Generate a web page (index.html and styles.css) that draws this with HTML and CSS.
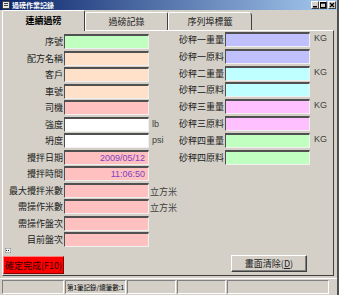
FILE: index.html
```html
<!DOCTYPE html>
<html lang="zh-Hant">
<head>
    <meta charset="UTF-8">
    <title>過磅作業記錄</title>
    <link rel="stylesheet" href="styles.css">
</head>
<body>
<div class="window">
    <div class="titlebar">
        <svg class="app-icon" width="8" height="8" viewBox="0 0 8 8">
            <rect x="0.5" y="0.5" width="7" height="7" fill="#e8e8e8" stroke="#404040"/>
            <rect x="2" y="2" width="4" height="1" fill="#404040"/>
            <rect x="2" y="4" width="4" height="1" fill="#404040"/>
        </svg>
        <span class="title">過磅作業記錄</span>
        <div class="controls">
            <span class="ctl"><svg width="6" height="6"><rect x="1" y="4" width="4" height="1.5" fill="#000"/></svg></span>
            <span class="ctl"><svg width="6" height="6"><rect x="0.5" y="0.5" width="5" height="5" fill="none" stroke="#000"/><rect x="0.5" y="0.5" width="5" height="1.2" fill="#000"/></svg></span>
            <span class="ctl"><svg width="6" height="6"><path d="M1 1 L5 5 M5 1 L1 5" stroke="#000" stroke-width="1.3"/></svg></span>
        </div>
    </div>

    <div class="tabs">
        <div class="tab active">連續過磅</div>
        <div class="tab">過磅記錄</div>
        <div class="tab last">序列埠標籤</div>
    </div>

    <div class="panel">
        <div class="columns">
            <div class="grid left">
                <span class="lbl">序號</span><span class="field green"></span><span></span>
                <span class="lbl">配方名稱</span><span class="field peach"></span><span></span>
                <span class="lbl">客戶</span><span class="field peach"></span><span></span>
                <span class="lbl">車號</span><span class="field peach"></span><span></span>
                <span class="lbl">司機</span><span class="field pink"></span><span></span>
                <span class="lbl">強度</span><span class="field white"></span><span class="unit">lb</span>
                <span class="lbl">坍度</span><span class="field white"></span><span class="unit">psi</span>
                <span class="lbl">攪拌日期</span><span class="field pink value">2009/05/12</span><span></span>
                <span class="lbl">攪拌時間</span><span class="field pink value">11:06:50</span><span></span>
                <span class="lbl">最大攪拌米數</span><span class="field pink"></span><span class="unit cjk">立方米</span>
                <span class="lbl">需操作米數</span><span class="field pink"></span><span class="unit cjk">立方米</span>
                <span class="lbl">需操作盤次</span><span class="field pink"></span><span></span>
                <span class="lbl">目前盤次</span><span class="field pink"></span><span></span>
            </div>
            <div class="grid right">
                <span class="lbl">砂秤一重量</span><span class="field lavender"></span><span class="unit kg">KG</span>
                <span class="lbl">砂秤一原料</span><span class="field lavender"></span><span></span>
                <span class="lbl">砂秤二重量</span><span class="field cyan"></span><span class="unit kg">KG</span>
                <span class="lbl">砂秤二原料</span><span class="field cyan"></span><span></span>
                <span class="lbl">砂秤三重量</span><span class="field magenta"></span><span class="unit kg">KG</span>
                <span class="lbl">砂秤三原料</span><span class="field magenta"></span><span></span>
                <span class="lbl">砂秤四重量</span><span class="field green"></span><span class="unit kg">KG</span>
                <span class="lbl">砂秤四原料</span><span class="field green"></span><span></span>
            </div>
        </div>

        <div class="footer">
            <div class="footer-left">
                <svg class="mini" width="6" height="5" viewBox="0 0 6 5">
                    <rect x="0" y="0" width="6" height="5" fill="#f4f4f4" stroke="#606060" stroke-width="0.8"/>
                    <rect x="1" y="2" width="1" height="1" fill="#202020"/>
                    <rect x="3" y="2" width="1" height="1" fill="#202020"/>
                </svg>
                <button class="btn btn-red">確定完成(F10)</button>
            </div>
            <button class="btn btn-clear">畫面清除(<u>D</u>)</button>
        </div>
    </div>

    <div class="statusbar">
        <span class="cell c1"></span>
        <span class="cell c2">第1筆記錄/總筆數:1</span>
        <span class="cell c3"></span>
        <span class="cell c4"></span>
        <span class="cell c5"></span>
    </div>
</div>
</body>
</html>
```

FILE: styles.css
```css
body {
    margin: 0;
    background: #d4d0c8;
    font-family: "Noto Sans CJK TC", "Noto Sans CJK SC", sans-serif;
    font-size: 9px;
    color: #000;
}
.window {
    width: 337px;
    height: 295px;
    border-right: 2px solid #505050;
    display: flex;
    flex-direction: column;
    overflow: hidden;
}
.titlebar {
    height: 10px;
    background: linear-gradient(to right, #0a246a, #a6caf0);
    display: flex;
    align-items: center;
    padding-left: 2px;
    color: #fff;
}
.app-icon {
    flex: none;
}
.title {
    font-size: 7px;
    font-weight: bold;
    margin-left: 2px;
    line-height: 10px;
}
.controls {
    margin-left: auto;
    display: flex;
    margin-right: 1px;
}
.ctl {
    width: 8px;
    height: 8px;
    background: #d4d0c8;
    border: 1px solid;
    border-color: #fff #404040 #404040 #fff;
    box-sizing: border-box;
    display: flex;
    align-items: center;
    justify-content: center;
}
.ctl:last-child {
    margin-left: 1px;
}
.tabs {
    height: 20px;
    display: flex;
    align-items: flex-end;
    padding-left: 2px;
    position: relative;
    z-index: 1;
}
.tab {
    width: 83px;
    height: 18px;
    box-sizing: border-box;
    border: 1px solid;
    border-color: #fff #404040 transparent #fff;
    border-bottom: none;
    border-radius: 2px 2px 0 0;
    text-align: center;
    line-height: 17px;
    background: #d4d0c8;
    color: #202020;
}
.tab.active {
    height: 21px;
    margin-bottom: -1px;
    font-weight: bold;
    line-height: 19px;
    color: #000;
}
.tab.last {
    width: 84px;
    border-radius: 2px 4px 0 0;
}
.panel {
    margin-left: 2px;
    width: 332px;
    height: 247px;
    box-sizing: border-box;
    border: 1px solid;
    border-color: #fff #404040 #404040 #fff;
    display: flex;
    flex-direction: column;
}
.columns {
    display: flex;
}
.grid {
    display: grid;
    grid-auto-rows: 15px;
    align-items: stretch;
}
.left {
    grid-template-columns: 60px 85px 20px;
    column-gap: 1px;
    row-gap: 1.5px;
    padding-top: 3px;
}
.right {
    grid-template-columns: 53px 85px 22px;
    column-gap: 1px;
    row-gap: 1.8px;
    padding-top: 1px;
    margin-left: 1px;
}
.lbl {
    text-align: right;
    line-height: 15px;
    white-space: nowrap;
    color: #202020;
}
.field {
    box-sizing: border-box;
    border: 1px solid;
    border-color: #505050 #f0f0f0 #f0f0f0 #505050;
    border-top-width: 2px;
}
.value {
    color: #8040c0;
    text-align: right;
    font-family: "Liberation Sans", sans-serif;
    font-size: 9px;
    line-height: 12px;
    padding-right: 3px;
}
.unit {
    font-family: "Liberation Sans", sans-serif;
    font-size: 9px;
    color: #404040;
    line-height: 15px;
    white-space: nowrap;
    padding-left: 2px;
}
.unit.cjk {
    font-family: "Noto Sans CJK TC", sans-serif;
    font-size: 9px;
    padding-left: 0;
    line-height: 17px;
}
.kg {
    padding-left: 3px;
    line-height: 13px;
}
.green { background: #c0ffc0; }
.peach { background: #ffe0c8; }
.pink { background: #ffc0c0; }
.white { background: #fff; }
.lavender { background: #c0c0ff; }
.cyan { background: #c0ffff; }
.magenta { background: #ffc0ff; }
.footer {
    margin-top: auto;
    display: flex;
    justify-content: space-between;
    align-items: flex-end;
    padding: 0 26px 1px 0;
}
.footer-left {
    display: flex;
    flex-direction: column;
    align-items: flex-start;
    gap: 3px;
}
.mini {
    margin-left: 2px;
}
.btn {
    font-family: "Noto Sans CJK TC", sans-serif;
    font-size: 9px;
    padding: 0;
    border: 1px solid;
    border-color: #fff #404040 #404040 #fff;
    box-sizing: border-box;
    cursor: pointer;
    color: #202020;
    white-space: nowrap;
}
.btn-red {
    width: 61px;
    height: 18px;
    background: #ff0000;
    border-color: #ff8080 #800000 #800000 #ff8080;
    color: #300000;
}
.btn-clear {
    width: 76px;
    height: 17px;
    margin-bottom: 2px;
    background: #d4d0c8;
    box-shadow: inset -1px -1px 0 #808080;
}
.statusbar {
    margin-top: 2px;
    height: 15px;
    display: flex;
    border-top: 1px solid #fff;
    padding-top: 1px;
}
.cell {
    height: 14px;
    box-sizing: border-box;
    border: 1px solid;
    border-color: #808080 #fff #fff #808080;
    margin-right: 1px;
    font-size: 6.5px;
    line-height: 12px;
    padding-left: 1px;
    white-space: nowrap;
}
.c1 { width: 62px; margin-left: 2px; }
.c2 { width: 61px; }
.c3 { width: 49px; }
.c4 { width: 49px; }
.c5 { width: 102px; }
```
